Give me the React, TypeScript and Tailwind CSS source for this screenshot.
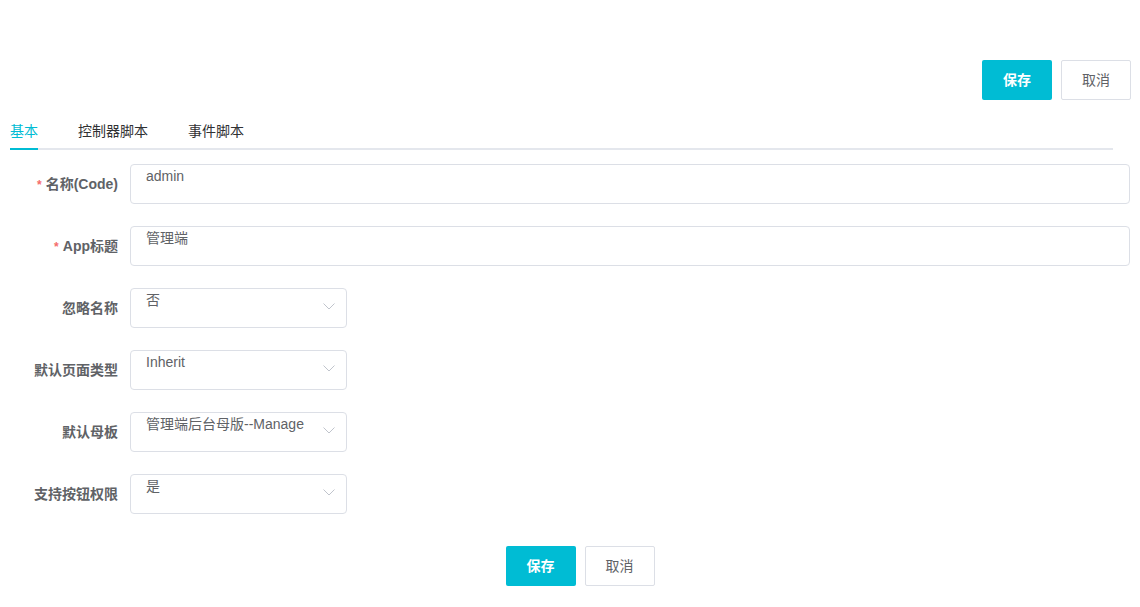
const font = { fontFamily: '"Liberation Sans", "Noto Sans CJK SC", sans-serif' };

function Btn({ primary, children }: { primary?: boolean; children: string }) {
  return primary ? (
    <button
      type="button"
      className="h-[40px] w-[70px] rounded-[2px] bg-[#00bcd4] text-[14px] font-bold text-white"
    >
      {children}
    </button>
  ) : (
    <button
      type="button"
      className="h-[40px] w-[70px] rounded-[2px] border border-[#dcdfe6] bg-white text-[14px] text-[#606266]"
    >
      {children}
    </button>
  );
}

function Row({
  label,
  required,
  children,
}: {
  label: string;
  required?: boolean;
  children: React.ReactNode;
}) {
  return (
    <div className="flex h-[40px] items-center">
      <div className="w-[118px] text-right text-[14px] font-bold text-[#606266]">
        {required && <span className="mr-[4px] text-[12px] text-[#f56c6c]">*</span>}
        {label}
      </div>
      <div className="ml-[12px] h-full">{children}</div>
    </div>
  );
}

function Input({ value }: { value: string }) {
  return (
    <div className="h-[40px] w-[1000px] rounded-[4px] border border-[#dcdfe6] bg-white pl-[15px] pt-[1px] text-[14px] leading-[20px] text-[#606266]">
      {value}
    </div>
  );
}

function Select({ value }: { value: string }) {
  return (
    <div className="flex h-[40px] w-[217px] justify-between rounded-[4px] border border-[#dcdfe6] bg-white pl-[15px] pr-[11px] pt-[1px] text-[14px] leading-[20px] text-[#606266]">
      <span>{value}</span>
      <svg width="12" height="7" viewBox="0 0 12 7" className="mt-[13px] shrink-0">
        <path d="M0.5 0.5 L6 6 L11.5 0.5" fill="none" stroke="#c0c4cc" strokeWidth="1" />
      </svg>
    </div>
  );
}

export default function App() {
  return (
    <div className="h-[607px] w-[1140px] bg-white" style={font}>
      <div className="flex justify-end gap-[9px] pr-[9px] pt-[60px]">
        <Btn primary>保存</Btn>
        <Btn>取消</Btn>
      </div>

      <div className="ml-[10px] mt-[20px] flex w-[1103px] gap-[40px] border-b-2 border-[#e4e7ed] text-[14px] leading-[22px]">
        <div className="-mb-[2px] border-b-2 border-[#00bcd4] pb-[6px] text-[#00bcd4]">基本</div>
        <div className="pb-[6px] text-[#303133]">控制器脚本</div>
        <div className="pb-[6px] text-[#303133]">事件脚本</div>
      </div>

      <div className="mt-[14px] flex flex-col gap-[22px]">
        <Row label="名称(Code)" required>
          <Input value="admin" />
        </Row>
        <Row label="App标题" required>
          <Input value="管理端" />
        </Row>
        <Row label="忽略名称">
          <Select value="否" />
        </Row>
        <Row label="默认页面类型">
          <Select value="Inherit" />
        </Row>
        <Row label="默认母板">
          <Select value="管理端后台母版--Manage" />
        </Row>
        <Row label="支持按钮权限">
          <Select value="是" />
        </Row>
      </div>

      <div className="mt-[32px] flex justify-center gap-[9px] pl-[20px]">
        <Btn primary>保存</Btn>
        <Btn>取消</Btn>
      </div>
    </div>
  );
}
